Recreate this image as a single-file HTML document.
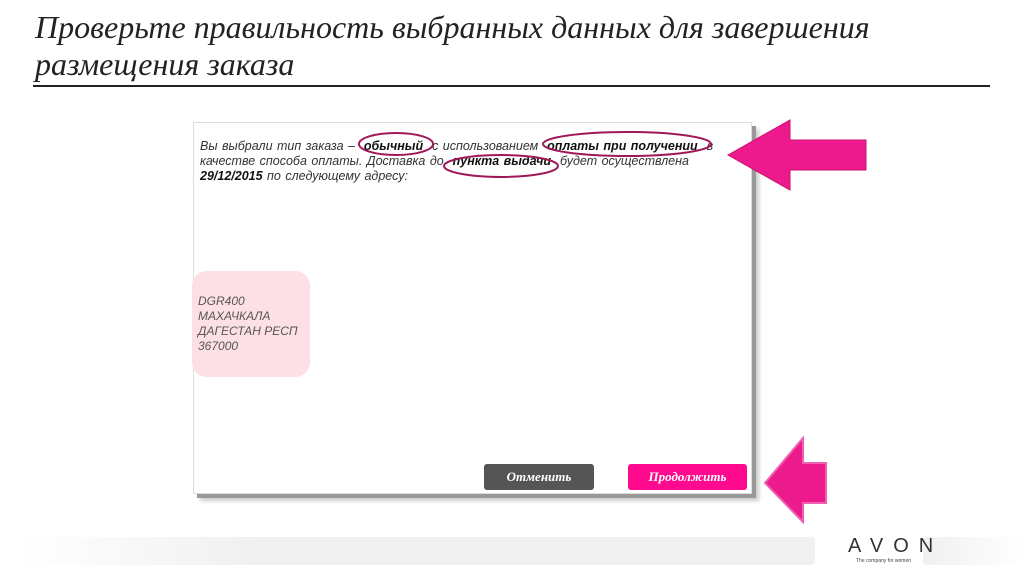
<!DOCTYPE html>
<html><head><meta charset="utf-8"><style>
body{margin:0;width:1024px;height:574px;background:#fff;position:relative;overflow:hidden;font-family:"Liberation Sans",sans-serif}
.t{position:absolute;left:35px;top:9px;font-family:"Liberation Serif",serif;font-style:italic;font-size:32px;line-height:37px;color:#222;white-space:nowrap}
.hr{position:absolute;left:33px;top:85px;width:957px;height:2px;background:#222}
.box{position:absolute;left:193px;top:122px;width:557px;height:370px;background:#fff;border:1px solid #ddd;box-shadow:4px 4px 0 #999,7px 7px 4px #ccc}
.p{position:absolute;left:200px;top:139px;font-size:12.5px;line-height:15px;font-style:italic;color:#333;white-space:nowrap;word-spacing:1px}
.p b{color:#111}
.addr{position:absolute;left:192px;top:271px;width:118px;height:106px;background:#fde0e6;border-radius:15px}
.addr div{position:absolute;left:6px;top:23px;font-size:12px;line-height:15px;font-style:italic;color:#555}
.btn{position:absolute;top:464px;height:26px;border-radius:3px;color:#fff;font-family:"Liberation Serif",serif;font-style:italic;font-weight:bold;font-size:13px;text-align:center;line-height:26px}
.foot{position:absolute;top:537px;height:28px;border-radius:4px;background:linear-gradient(90deg,#fff,#f0f0f0 30%,#f0f0f0)}
</style></head><body>
<div class="t">Проверьте правильность выбранных данных для завершения<br>размещения заказа</div>
<div class="hr"></div>
<div class="box"></div>
<div class="p">Вы выбрали тип заказа –&nbsp; <b>обычный</b>&nbsp; с использованием&nbsp; <b>оплаты при получении</b>&nbsp; в<br>качестве способа оплаты. Доставка до&nbsp; <b>пункта выдачи</b>&nbsp; будет осуществлена<br><b>29/12/2015</b> по следующему адресу:</div>
<svg style="position:absolute;left:0;top:0" width="1024" height="574">
<g fill="none" stroke="#a0185a" stroke-width="2">
<ellipse cx="396" cy="144" rx="37" ry="11"/>
<ellipse cx="627" cy="144" rx="84" ry="12"/>
<ellipse cx="501" cy="166" rx="57" ry="11"/>
</g>
<polygon points="728,155 790,120 790,140 866,140 866,170 790,170 790,190" fill="#ec1a8c" stroke="#d01070"/>
<polygon points="765,483 803,438 803,463 826,463 826,503 803,503 803,522" fill="#ec1a8c" stroke="#f060b0" stroke-width="2"/>
</svg>
<div class="addr"><div>DGR400<br>МАХАЧКАЛА<br>ДАГЕСТАН РЕСП<br>367000</div></div>
<div class="btn" style="left:484px;width:110px;background:#555">Отменить</div>
<div class="btn" style="left:628px;width:119px;background:#ff0a8f">Продолжить</div>
<div class="foot" style="left:20px;width:795px"></div>
<div class="foot" style="left:923px;width:101px;background:linear-gradient(90deg,#f0f0f0,#fff)"></div>
<div style="position:absolute;left:848px;top:535px;font-size:20px;letter-spacing:10px;color:#333;font-weight:300">AVON</div>
<div style="position:absolute;left:856px;top:558px;font-size:5px;color:#444">The company for women</div>
</body></html>
